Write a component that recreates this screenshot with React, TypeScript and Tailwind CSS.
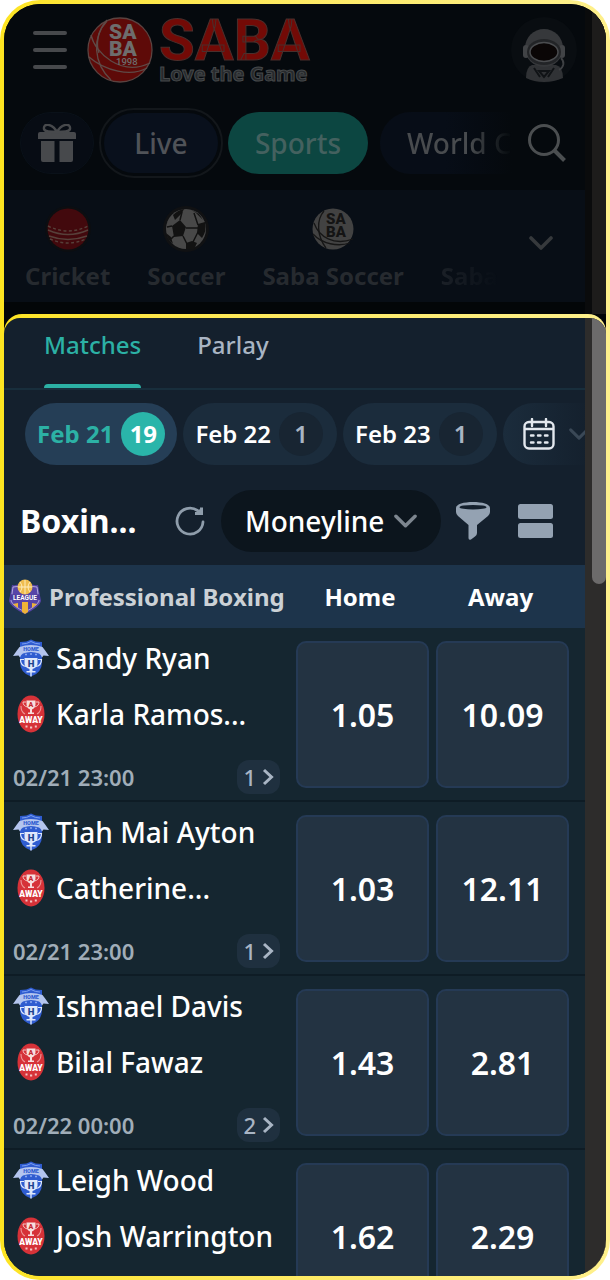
import React from "react";

type Match = {
  home: string;
  away: string;
  time?: string;
  more?: number;
  odds: [string, string];
};

const matches: Match[] = [
  { home: "Sandy Ryan", away: "Karla Ramos...", time: "02/21 23:00", more: 1, odds: ["1.05", "10.09"] },
  { home: "Tiah Mai Ayton", away: "Catherine...", time: "02/21 23:00", more: 1, odds: ["1.03", "12.11"] },
  { home: "Ishmael Davis", away: "Bilal Fawaz", time: "02/22 00:00", more: 2, odds: ["1.43", "2.81"] },
  { home: "Leigh Wood", away: "Josh Warrington", odds: ["1.62", "2.29"] },
];

function BallLogo() {
  return (
    <svg viewBox="0 0 66 66" className="size-[66px] shrink-0" aria-hidden="true">
      <circle cx="33" cy="33" r="32" fill="#5e0a08" stroke="#5a4340" strokeWidth="1.3" />
      <g fill="none" stroke="#5f4a47" strokeWidth="1.3">
        <path d="M20 4C5 20 6 46 24 63" />
        <path d="M4 18C8 36 34 60 63 46" />
        <path d="M2 40C18 54 44 60 60 51" />
        <path d="M20 3C10 14 9 28 12 36" />
      </g>
      <g fill="#6d6d6d" fontFamily="Roboto, sans-serif" fontWeight="900">
        <text x="22" y="22" fontSize="21">SA</text>
        <text x="22" y="39" fontSize="21">BA</text>
        <text x="29" y="48" fontSize="9.500" fontWeight="500">1998</text>
      </g>
    </svg>
  );
}

function Astronaut() {
  return (
    <svg viewBox="0 0 66 66" className="size-[66px]" aria-hidden="true">
      <circle cx="33" cy="33" r="33" fill="#090d11" />
      <path d="M15 61q0-11 6-13h24q7 2 7 13-9 4-19 4t-18-4z" fill="#303235" />
      <path d="M23 51l6 9M43 51l-6 9M28 54h10l-5 6z" stroke="#101316" strokeWidth="2" fill="none" />
      <circle cx="33" cy="31" r="19" fill="#36383b" />
      <rect x="12" y="28" width="6" height="13" rx="3" fill="#414346" />
      <rect x="48" y="28" width="6" height="13" rx="3" fill="#414346" />
      <ellipse cx="33" cy="35" rx="17" ry="13" fill="#222427" />
      <ellipse cx="33" cy="35" rx="14" ry="9.500" fill="#0a0606" stroke="#4a4c4f" strokeWidth="1.500" />
      <path d="M50 41c4 4 3 9-2 12" stroke="#3e4043" strokeWidth="1.800" fill="none" />
    </svg>
  );
}

function GiftIcon() {
  return (
    <svg viewBox="0 0 38 38" className="size-[38px]" fill="#47494c" aria-hidden="true">
      <path d="M0 10q0-2 2-2h34q2 0 2 2v5H0z" />
      <path d="M3 17h13.500v21H5q-2 0-2-2zM21.500 17H35v19q0 2-2 2H21.500z" />
      <path d="M19 8C14-1 5-1 6 5c1 3 7 3 13 3zM19 8c5-9 14-9 13-3-1 3-7 3-13 3z" fill="none" stroke="#47494c" strokeWidth="2.400" />
    </svg>
  );
}

function CricketBall() {
  return (
    <svg viewBox="0 0 46 46" className="size-[46px]" aria-hidden="true">
      <circle cx="23" cy="23" r="23" fill="#0c0e11" />
      <circle cx="23" cy="23" r="20.500" fill="#42090d" />
      <g fill="none" stroke="#57403a" strokeWidth="1.400">
        <path d="M3 20q20 10 40 0" strokeDasharray="3 2.400" />
        <path d="M3 24q20 9 40 0" />
        <path d="M4 30q19 7 38 0" />
        <path d="M5 33q18 8 36 0" strokeDasharray="3 2.400" />
      </g>
    </svg>
  );
}

function SoccerBall() {
  return (
    <svg viewBox="0 0 46 46" className="size-[46px]" aria-hidden="true">
      <circle cx="23" cy="23" r="23" fill="#101113" />
      <circle cx="23" cy="23" r="20" fill="#484848" />
      <g fill="#121212">
        <path d="M9 20l8-6 6 7-3 9-9 1z" />
        <path d="M10 9q5-5 11-6l-2 4-7 7zM28 4q8 2 12 10l-8-8zM35 18l7-2q2 9-3 16l-5-5zM23 37l6-2 5 2-3 6h-8zM3 27l5 4 2 7q-6-5-7-11z" />
      </g>
      <g fill="none" stroke="#121212" strokeWidth="1.500">
        <path d="M17 14l2-8M23 22h12M20 30l4 8M11 30l-3 3M35 19l-4-12M35 26l-5 10M9 20l-5 1" />
      </g>
    </svg>
  );
}

function SabaBall() {
  return (
    <svg viewBox="0 0 46 46" className="size-[46px]" aria-hidden="true">
      <circle cx="23" cy="23" r="20.500" fill="#424242" />
      <g fill="none" stroke="#161616" strokeWidth="1.300">
        <path d="M14 5C6 14 7 30 16 42" />
        <path d="M4 17C9 31 24 40 43 33" />
        <path d="M3 28C12 38 28 41 40 37" />
      </g>
      <g fill="#141414" fontFamily="Roboto, sans-serif" fontWeight="900" fontSize="15">
        <text x="16" y="18">SA</text>
        <text x="16" y="31">BA</text>
      </g>
    </svg>
  );
}

function Chevron({ className }: { className: string }) {
  return (
    <svg viewBox="0 0 24 14" className={className} fill="none" stroke="currentColor" strokeWidth="3.600" strokeLinecap="round" strokeLinejoin="round" aria-hidden="true">
      <path d="M2 2l10 10L22 2" />
    </svg>
  );
}

function SearchIcon() {
  return (
    <svg viewBox="0 0 38 38" className="size-[38px]" fill="none" stroke="#4b4e50" strokeWidth="3" aria-hidden="true">
      <circle cx="16" cy="16" r="14.500" />
      <path d="M26 26l10.500 10.500" strokeWidth="4" />
    </svg>
  );
}

function CalendarIcon() {
  return (
    <svg viewBox="0 0 32 32" className="size-8" fill="none" stroke="#e3e8ee" strokeWidth="2.400" strokeLinecap="round" aria-hidden="true">
      <rect x="1.500" y="4" width="29" height="26.500" rx="4.500" />
      <path d="M2 11h28M9 1v7M23 1v7" />
      <path d="M8 17.500h2.500M15 17.500h2.500M22 17.500h2.500M8 24.500h2.500M15 24.500h2.500M22 24.500h2.500" />
    </svg>
  );
}

function RefreshIcon() {
  return (
    <svg viewBox="0 0 30 30" className="size-[30px]" fill="none" stroke="#8f9dab" strokeWidth="2.800" strokeLinecap="round" aria-hidden="true">
      <path d="M28 16A13 13 0 1 1 22.500 4.500" />
      <path d="M20 7.500h6.500V1.500" strokeLinecap="butt" strokeWidth="3" />
      <path d="M20 7.500l6-5.500v5.500z" fill="#8f9dab" stroke="none" />
    </svg>
  );
}

function FunnelIcon() {
  return (
    <svg viewBox="0 0 34 38" className="h-[38px] w-[34px]" aria-hidden="true">
      <path d="M0 6C0 2 8 0 17 0s17 2 17 6v4q0 2-2 4L21 23v8q0 2-2 3.500l-4 3q-2.500 1-2.500-1.500V23L2 14q-2-2-2-4z" fill="#94a2b2" />
      <ellipse cx="17" cy="5.200" rx="13.500" ry="2.300" fill="#14202d" />
    </svg>
  );
}

function RowsIcon() {
  return (
    <svg viewBox="0 0 35 34" className="h-[34px] w-[35px]" fill="#94a2b2" aria-hidden="true">
      <rect width="35" height="15" rx="2.500" />
      <rect y="19" width="35" height="15" rx="2.500" />
    </svg>
  );
}

function LeagueBadge() {
  return (
    <svg viewBox="0 0 32 36" className="h-9 w-8 shrink-0" aria-hidden="true">
      <path d="M3 6Q9 7 16 3q7 4 13 3l3 16q-1 6-16 13Q1 28 0 22z" fill="#5744a8" />
      <path d="M4 8q7 0 12-3 5 3 12 3l2 14q-2 5-14 11Q4 27 2 22z" fill="none" stroke="#b9b3df" strokeWidth="0.900" />
      <path d="M4 25l5-1v5zM28 25l-5-1v5zM13 23h6v10l-3 2-3-2z" fill="#eeb338" />
      <circle cx="16" cy="8" r="7.500" fill="#efbd4f" />
      <path d="M16 1v14M9 8h14M11 3q4 5 0 10M21 3q-4 5 0 10" stroke="#fff0c6" strokeWidth="0.900" fill="none" />
      <path d="M1 15q15 3 30 0v6q-15-2-30 0z" fill="#4a3a9a" />
      <text x="16" y="21" textAnchor="middle" fontFamily="Roboto, sans-serif" fontSize="6.500" fontWeight="700" fill="#fff">LEAGUE</text>
    </svg>
  );
}

function HomeBadge() {
  return (
    <svg viewBox="0 0 36 38" className="h-[38px] w-9" aria-hidden="true">
      <path d="M7 3q7 0 11-2.500Q22 3 29 3v20q0 11-11 14.500Q7 34 7 23z" fill="#2f5cd0" />
      <path d="M9 5q5 0 9-2.500Q22 5 27 5" fill="none" stroke="#7c9ff0" strokeWidth="1" />
      <path d="M0 17l3.500-5 3-4q11.500-4 23 0l3 4 3.500 5-5.500-.5-1.500 2q-1-3-3-4-8-3-16 0-2 1-3 4l-1.500-2z" fill="#b4c5ee" />
      <text x="18" y="12" textAnchor="middle" fontFamily="Roboto, sans-serif" fontSize="5.500" fontWeight="900" fill="#2f5cd0">HOME</text>
      <path d="M12 15.500h2M17 15h2M22 15.500h2" stroke="#8aa6ee" strokeWidth="1.300" />
      <path d="M11.500 19h13v6q-1 4-5 5v2h3v1.500h-9V32h3v-2q-4-1-5-5zM17.300 33h1.400v4.500h-1.400z" fill="#dfe8fb" />
      <path d="M11 20.500H7.500q0 6 5.500 7M25 20.500h3.500q0 6-5.500 7" fill="none" stroke="#dfe8fb" strokeWidth="1.200" />
      <text x="18" y="28" textAnchor="middle" fontFamily="Roboto, sans-serif" fontSize="9.500" fontWeight="900" fill="#1f438f">H</text>
    </svg>
  );
}

function AwayBadge() {
  return (
    <svg viewBox="0 0 28 38" className="h-[38px] w-7" aria-hidden="true">
      <ellipse cx="14" cy="19" rx="13.500" ry="18.500" fill="#d63238" />
      <path d="M9.500 5.500h9v4q-.5 4-3.500 5v3h2v1.500h-6V17.500h2v-3q-3-1-3.500-5z" fill="#f7dedd" />
      <path d="M9 7H6q0 4 4.500 5M19 7h3q0 4-4.500 5" fill="none" stroke="#f3c4c3" strokeWidth="1" />
      <text x="14" y="12" textAnchor="middle" fontFamily="Roboto, sans-serif" fontSize="7" fontWeight="900" fill="#c4262d">A</text>
      <path d="M4 11q0 6 4 8M24 11q0 6-4 8" fill="none" stroke="#e99" strokeWidth="1.100" />
      <text x="14" y="27.500" textAnchor="middle" fontFamily="Roboto, sans-serif" fontSize="8.500" fontWeight="900" fill="#fff">AWAY</text>
      <path d="M8.500 31.500h2M13 32.500h2.200M17.800 31.500h2" stroke="#f3c4c3" strokeWidth="1.800" />
    </svg>
  );
}

function Team({ icon, name }: { icon: React.ReactNode; name: string }) {
  return (
    <div className="flex h-14 items-center gap-[7px]">
      <span className="flex w-9 shrink-0 justify-center">{icon}</span>
      <span className="text-[28px] font-medium whitespace-nowrap text-white">{name}</span>
    </div>
  );
}

function DateChip({ day, count, active }: { day: string; count: number; active?: boolean }) {
  return (
    <button
      className={
        active
          ? "flex h-[62px] shrink-0 items-center gap-2 rounded-full bg-[#253e56] px-3 text-2xl font-bold text-[#2cb1a5]"
          : "flex h-[62px] shrink-0 items-center gap-2 rounded-full bg-[#1b2c3c] pr-3.5 pl-3 text-2xl font-semibold text-white"
      }
    >
      <span className="whitespace-nowrap">{day}</span>
      <span
        className={
          active
            ? "flex size-11 items-center justify-center rounded-full bg-[#2ab5aa] text-white"
            : "flex size-11 items-center justify-center rounded-full bg-[#182532] text-[#a9b5c4]"
        }
      >
        {count}
      </span>
    </button>
  );
}

function Sport({ icon, label }: { icon: React.ReactNode; label: string }) {
  return (
    <a href="#sport" className="flex shrink-0 flex-col items-center gap-2">
      {icon}
      <span className="text-2xl font-bold whitespace-nowrap text-[#262a2f]">{label}</span>
    </a>
  );
}

export default function App() {
  return (
    <div className="h-screen bg-white font-['Noto_Sans',sans-serif]">
      <div className="h-full rounded-[40px] bg-gradient-to-r from-[#fde420] to-[#fef08c] p-1">
        <div className="flex h-full flex-col overflow-hidden rounded-[36px] bg-[#030608]">
          <div className="flex h-[310px] shrink-0">
            <div className="flex min-w-0 flex-1 flex-col">
              <header className="flex h-[92px] shrink-0 items-center bg-[#05090d] pr-2 pl-[29px]">
                <button aria-label="Menu" className="flex w-[34px] flex-col gap-[13px]">
                  <span className="h-1 w-full rounded-full bg-[#47494c]" />
                  <span className="h-1 w-full rounded-full bg-[#47494c]" />
                  <span className="h-1 w-full rounded-full bg-[#47494c]" />
                </button>
                <a href="#home" className="ml-5 flex items-center gap-1.5">
                  <BallLogo />
                  <span className="flex flex-col">
                    <span className="font-[Roboto] text-[58px] leading-[48px] font-bold text-[#730a06] [-webkit-text-stroke:1px_#4a2f2c]">SABA</span>
                    <span className="text-xl leading-5 font-bold whitespace-nowrap text-[#26292c] [-webkit-text-stroke:1px_#45484a]">Love the Game</span>
                  </span>
                </a>
                <button aria-label="Account" className="ml-auto">
                  <Astronaut />
                </button>
              </header>
              <div className="flex h-[94px] shrink-0 items-center bg-[#05090d] pr-[19px] pl-4">
                <nav className="flex min-w-0 flex-1 items-center gap-[5px] overflow-hidden text-[28px] font-medium">
                  <button aria-label="Promotions" className="flex h-[62px] w-[74px] shrink-0 items-center justify-center rounded-full border border-[#0a1119] bg-[#070c14]">
                    <GiftIcon />
                  </button>
                  <button className="flex h-[70px] w-[124px] shrink-0 rounded-full border-2 border-[#13171b] p-[3px] text-[#505358]">
                    <span className="flex h-full w-full items-center justify-center rounded-full bg-[#09101c]">Live</span>
                  </button>
                  <button className="h-[62px] w-[140px] shrink-0 rounded-full bg-[#0c4641] text-[#44615f]">Sports</button>
                  <button className="ml-[7px] h-[62px] shrink-0 rounded-l-full bg-gradient-to-r from-[#070d17] from-50% to-[#05090d] pl-[27px]">
                    <span className="bg-gradient-to-r from-[#484b4e] from-60% to-[#05090d] bg-clip-text whitespace-nowrap text-transparent">World C</span>
                  </button>
                </nav>
                <button aria-label="Search" className="ml-3 shrink-0">
                  <SearchIcon />
                </button>
              </div>
              <div className="flex h-[112px] shrink-0 items-center bg-[#080e16] pr-8 pb-1.5 pl-[21px]">
                <nav className="flex min-w-0 flex-1 gap-[37px] overflow-hidden pt-3">
                  <Sport icon={<CricketBall />} label="Cricket" />
                  <Sport icon={<SoccerBall />} label="Soccer" />
                  <Sport icon={<SabaBall />} label="Saba Soccer" />
                  <a href="#sport" className="flex shrink-0 items-end">
                    <span className="bg-gradient-to-r from-[#1b2027] to-[#080e16] bg-clip-text text-2xl font-bold text-transparent">Saba</span>
                  </a>
                </nav>
                <button aria-label="More sports" className="ml-5 text-[#36393c]">
                  <Chevron className="h-[14px] w-6" />
                </button>
              </div>
            </div>
            <div className="flex w-[21px] justify-end bg-[#0a0b0c]">
              <div className="w-[14px] bg-[#1d1c1b]" />
            </div>
          </div>

          <div className="flex min-h-0 flex-1 rounded-t-[18px] bg-gradient-to-r from-[#fde420] to-[#fef08c] pt-1">
            <div className="flex min-w-0 flex-1 overflow-hidden rounded-t-[16px]">
              <main className="min-w-0 flex-1 overflow-hidden bg-[#14202d]">
                <nav className="flex h-[72px] gap-14 border-b-2 border-[#182e3c] pl-10 text-2xl font-medium">
                  <a href="#matches" className="flex flex-col justify-between pt-[11px] text-[#2cb1a5]">
                    Matches
                    <span className="h-1 rounded-t bg-[#2cb1a5]" />
                  </a>
                  <a href="#parlay" className="pt-[11px] text-[#a9b5c4]">Parlay</a>
                </nav>
                <div className="flex gap-1.5 pt-[13px] pl-[21px]">
                  <DateChip day="Feb 21" count={19} active />
                  <DateChip day="Feb 22" count={1} />
                  <DateChip day="Feb 23" count={1} />
                  <button aria-label="Pick a date" className="flex h-[62px] shrink-0 items-center gap-3.5 rounded-l-full bg-gradient-to-r from-[#1b2c3c] to-[#14202d] pl-5 text-[#3a4856]">
                    <CalendarIcon />
                    <Chevron className="h-3 w-5" />
                  </button>
                </div>
                <div className="flex h-[100px] items-center pt-3 pr-8 pl-4">
                  <h1 className="min-w-0 flex-1 text-[32px] font-bold whitespace-nowrap text-white">Boxin...</h1>
                  <button aria-label="Refresh" className="mr-4">
                    <RefreshIcon />
                  </button>
                  <div className="relative h-[62px] w-[220px] shrink-0">
                    <select aria-label="Market" className="h-full w-full appearance-none rounded-full bg-[#0c151d] pl-6 text-[28px] font-medium text-white">
                      <option>Moneyline</option>
                    </select>
                    <span className="pointer-events-none absolute inset-y-0 right-6 flex items-center text-[#7d868f]">
                      <Chevron className="h-[14px] w-[23px]" />
                    </span>
                  </div>
                  <button aria-label="Filter" className="ml-[15px]">
                    <FunnelIcon />
                  </button>
                  <button aria-label="Layout" className="ml-7">
                    <RowsIcon />
                  </button>
                </div>
                <table className="w-full table-fixed border-separate border-spacing-0">
                  <thead>
                    <tr className="h-[63px] bg-[#1d344b] text-2xl font-bold text-white">
                      <th className="p-0 pl-[5px] text-left font-bold">
                        <span className="flex items-center gap-2 whitespace-nowrap text-[#cbd1d6]">
                          <LeagueBadge />
                          Professional Boxing
                        </span>
                      </th>
                      <th className="w-[140px] p-0 pr-1 font-bold">Home</th>
                      <th className="w-[153px] p-0 pr-4 font-bold">Away</th>
                    </tr>
                  </thead>
                  <tbody className="bg-[#152630]">
                    {matches.map((match) => (
                      <tr key={match.home}>
                        <td className="border-b-2 border-[#0e1c25] p-0 pt-0.5 pr-3 pl-[9px] align-top">
                          <Team icon={<HomeBadge />} name={match.home} />
                          <Team icon={<AwayBadge />} name={match.away} />
                          {match.time && (
                            <div className="mt-[18px] flex items-center justify-between">
                              <time className="text-[22px] font-semibold text-[#a0adb8]">{match.time}</time>
                              <button className="flex h-[34px] items-center gap-1.5 rounded-xl bg-[#1f303f] px-1.5 text-[22px] font-medium text-[#a9b5c4]">
                                {match.more}
                                <svg viewBox="0 0 12 18" className="h-[18px] w-3" fill="none" stroke="currentColor" strokeWidth="3" aria-hidden="true">
                                  <path d="M2 2l7.500 7L2 16" />
                                </svg>
                              </button>
                            </div>
                          )}
                        </td>
                        <td className="border-b-2 border-[#0e1c25] p-0 pt-[13px] pr-[3px] pb-3 pl-1">
                          <button className="block h-[147px] w-full rounded-[10px] border-2 border-[#253a55] bg-[#233342] text-[32px] font-semibold text-white">{match.odds[0]}</button>
                        </td>
                        <td className="border-b-2 border-[#0e1c25] p-0 pt-[13px] pr-4 pb-3 pl-1">
                          <button className="block h-[147px] w-full rounded-[10px] border-2 border-[#253a55] bg-[#233342] text-[32px] font-semibold text-white">{match.odds[1]}</button>
                        </td>
                      </tr>
                    ))}
                  </tbody>
                </table>
              </main>
              <div className="flex w-[21px] justify-end bg-[#2d2c2b]">
                <div className="h-[266px] w-[14px] rounded-b-full bg-[#6c6b6b]" />
              </div>
            </div>
          </div>
        </div>
      </div>
    </div>
  );
}
